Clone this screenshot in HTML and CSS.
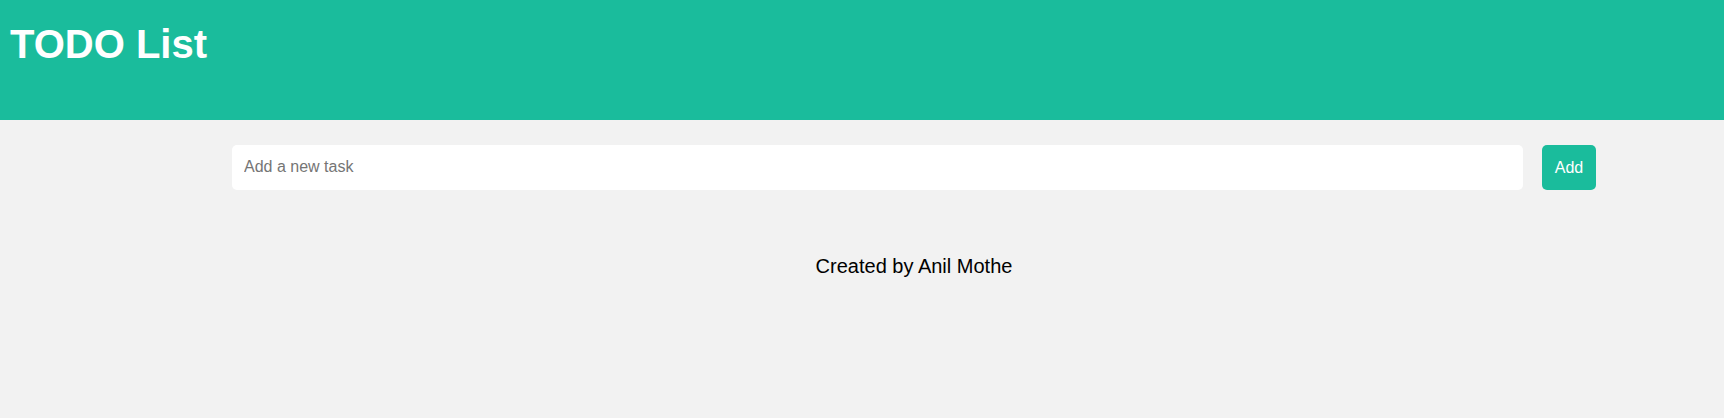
FILE: index.html
```html
<!DOCTYPE html>
<html lang="en">
<head>
<meta charset="utf-8">
<title>TODO List</title>
<link rel="stylesheet" href="styles.css">
</head>
<body>
<header class="header">
  <h1 class="title">TODO List</h1>
</header>
<main class="main">
  <form class="task-form" onsubmit="return false;">
    <input class="task-input" type="text" placeholder="Add a new task">
    <button class="add-btn" type="submit">Add</button>
  </form>
  <ul class="task-list"></ul>
  <footer class="credit">Created by Anil Mothe</footer>
</main>
</body>
</html>
```
FILE: styles.css
```css
* { box-sizing: border-box; }
html, body { margin: 0; padding: 0; }
body {
  background: #f2f2f2;
  font-family: "Liberation Sans", Arial, sans-serif;
  height: 418px;
}
.header {
  background: #1abc9c;
  height: 120px;
  padding: 21px 10px 0;
}
.title {
  margin: 0;
  color: #fff;
  font-size: 40px;
  font-weight: bold;
  line-height: 46px;
}
.main {
  margin-left: 232px;
  width: 1364px;
  padding-top: 25px;
}
.task-form {
  display: flex;
  gap: 19px;
  margin: 0;
}
.task-input {
  flex: 1;
  height: 45px;
  border: none;
  border-radius: 5px;
  background: #fff;
  padding: 0 12px 2px;
  font-family: "Liberation Sans", Arial, sans-serif;
  font-size: 16px;
  color: #333;
  outline: none;
}
.task-input::placeholder { color: #757575; }
.add-btn {
  width: 54px;
  height: 45px;
  border: none;
  border-radius: 5px;
  background: #1abc9c;
  color: #fff;
  font-family: "Liberation Sans", Arial, sans-serif;
  font-size: 16px;
  padding: 0;
  cursor: pointer;
}
.task-list {
  list-style: none;
  margin: 0;
  padding: 0;
}
.credit {
  margin-top: 65px;
  text-align: center;
  font-size: 20px;
  line-height: 23px;
  color: #000;
}
```
